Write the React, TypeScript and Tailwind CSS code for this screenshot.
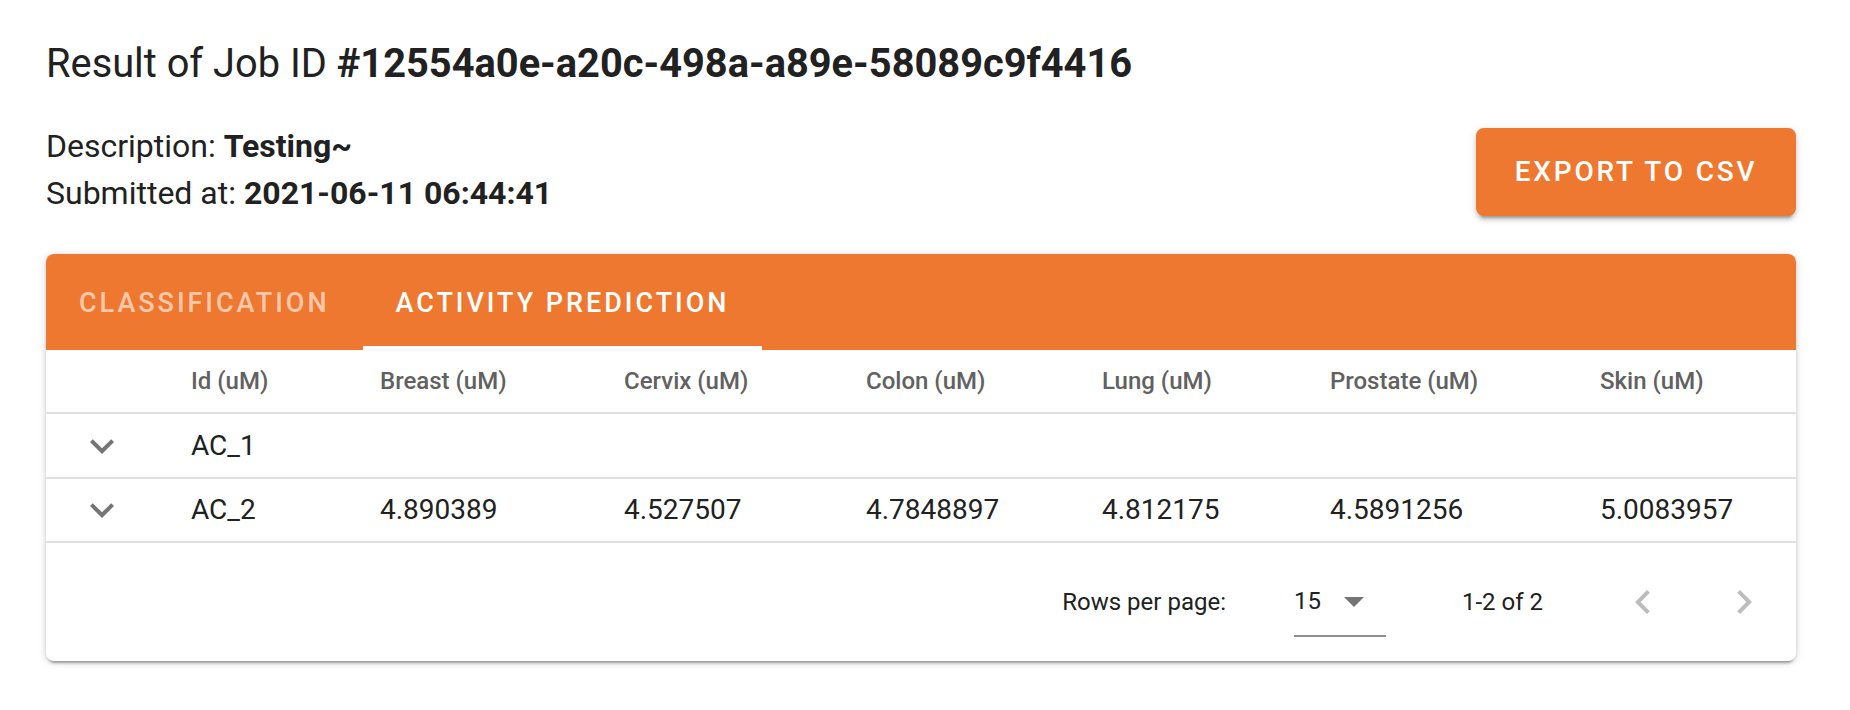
import { useState } from "react";

const columns = [
  "Id (uM)",
  "Breast (uM)",
  "Cervix (uM)",
  "Colon (uM)",
  "Lung (uM)",
  "Prostate (uM)",
  "Skin (uM)"
];

const rows = [
  { id: "AC_1", values: ["", "", "", "", "", ""] },
  {
    id: "AC_2",
    values: ["4.890389", "4.527507", "4.7848897", "4.812175", "4.5891256", "5.0083957"]
  }
];

// column template shared by header and body rows
const grid = "grid grid-cols-[145px_189px_244px_242px_236px_228px_270px_1fr] items-center";

function ExpandIcon() {
  return (
    <svg viewBox="0 0 24 24" className="h-[48px] w-[48px] fill-[#757575]">
      <path d="M16.59 8.59 12 13.17 7.41 8.59 6 10l6 6 6-6z" />
    </svg>
  );
}

function Pagination() {
  return (
    <div className="flex h-[118px] items-center justify-end pr-[28px] text-[24px] text-[#212121]">
      <span>Rows per page:</span>
      <div className="ml-[68px] flex h-[70px] w-[92px] items-center border-b-2 border-[#8e8e8e]">
        <span>15</span>
        <svg viewBox="0 0 24 24" className="ml-[9px] h-[48px] w-[48px] fill-[#757575]">
          <path d="M7 10l5 5 5-5z" />
        </svg>
      </div>
      <span className="ml-[76px]">1-2 of 2</span>
      <svg viewBox="0 0 24 24" className="ml-[76px] h-[48px] w-[48px] fill-[#bdbdbd]">
        <path d="M15.41 7.41 14 6l-6 6 6 6 1.41-1.41L10.83 12z" />
      </svg>
      <svg viewBox="0 0 24 24" className="ml-[53px] h-[48px] w-[48px] fill-[#bdbdbd]">
        <path d="M10 6 8.59 7.41 13.17 12l-4.58 4.59L10 18l6-6z" />
      </svg>
    </div>
  );
}

export default function App() {
  const [tab, setTab] = useState(1);

  return (
    <div className="min-h-screen bg-white pl-[46px] pr-[54px] pt-[41px] font-['Roboto',sans-serif] text-[#212121]">
      <h1 className="text-[39.8px] leading-[46px] font-normal">
        Result of Job ID <span className="font-bold">#12554a0e-a20c-498a-a89e-58089c9f4416</span>
      </h1>

      <div className="mt-[36px] flex items-start justify-between">
        <div className="text-[32px] leading-[47px]">
          <div>
            Description: <span className="font-bold">Testing~</span>
          </div>
          <div>
            Submitted at: <span className="font-bold">2021-06-11 06:44:41</span>
          </div>
        </div>
        <button className="mt-[5px] h-[88px] w-[320px] rounded-[8px] bg-[#ef7831] text-[28px] font-medium tracking-[0.1em] text-white shadow-[0_6px_2px_-4px_rgba(0,0,0,0.2),0_4px_4px_0_rgba(0,0,0,0.14),0_2px_10px_0_rgba(0,0,0,0.12)]">
          EXPORT TO CSV
        </button>
      </div>

      <div className="mt-[37px] overflow-hidden rounded-[8px] bg-white shadow-[0_5px_2px_-3px_rgba(0,0,0,0.25),0_2px_4px_0_rgba(0,0,0,0.14),0_1px_10px_0_rgba(0,0,0,0.12)]">
        <div className="flex h-[96px] bg-[#ef7831]">
          {["CLASSIFICATION", "ACTIVITY PREDICTION"].map((label, i) => (
            <button
              key={label}
              onClick={() => setTab(i)}
              className={
                "relative flex h-full items-center px-[33px] pt-[2px] text-[27px] font-medium tracking-[0.11em] " +
                (tab === i ? "text-white" : "text-white/60")
              }
            >
              {label}
              {tab === i && <span className="absolute bottom-0 left-0 h-[4px] w-full bg-white" />}
            </button>
          ))}
        </div>

        <div className={grid + " h-[64px] border-b-2 border-[#e0e0e0] text-[24px] font-medium text-[#616161]"}>
          <div />
          {columns.map((c) => (
            <div key={c}>{c}</div>
          ))}
        </div>

        {rows.map((r, i) => (
          <div
            key={r.id}
            className={grid + " border-b-2 border-[#e0e0e0] text-[28px] " + (i === 0 ? "h-[65px]" : "h-[64px]")}
          >
            <div className="pl-[32px]">
              <ExpandIcon />
            </div>
            <div>{r.id}</div>
            {r.values.map((v, j) => (
              <div key={j}>{v}</div>
            ))}
          </div>
        ))}

        <Pagination />
      </div>
    </div>
  );
}
